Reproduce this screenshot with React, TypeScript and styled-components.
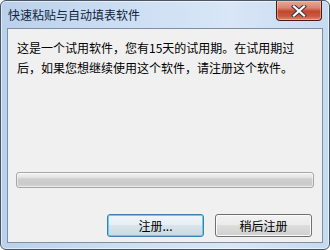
import React from "react";
import styled, { createGlobalStyle } from "styled-components";

const Global = createGlobalStyle`
  html, body { margin: 0; padding: 0; background: #ffffff; }
  body { width: 330px; height: 250px; overflow: hidden; }
  * { box-sizing: border-box; }
`;

const Window = styled.div`
  width: 330px;
  height: 250px;
  display: flex;
  flex-direction: column;
  border: 1px solid #4a5566;
  border-radius: 6px;
  background: linear-gradient(to right, #bad1eb 0%, #cddff3 40%, #d8e6f6 70%, #c6daf0 100%);
  box-shadow: inset 0 0 0 1px rgba(255, 255, 255, 0.55);
  overflow: hidden;
`;

const TitleBar = styled.div`
  height: 27px;
  flex: none;
  display: flex;
  align-items: flex-start;
  justify-content: space-between;
`;

const Title = styled.div`
  padding: 6px 0 0 7px;
  font-family: "Noto Sans CJK SC", "Noto Sans", sans-serif;
  font-size: 12px;
  line-height: 16px;
  color: #10243c;
`;

const CloseButton = styled.div`
  width: 46px;
  height: 20px;
  margin-right: 7px;
  border: 1px solid #4c1a12;
  border-top: none;
  border-radius: 0 0 4px 4px;
  background: linear-gradient(#e8a898 0%, #d88772 35%, #c4462f 55%, #c65a42 80%, #e08a70 100%);
  box-shadow: inset 0 0 0 1px rgba(255, 210, 200, 0.45);
  display: flex;
  align-items: center;
  justify-content: center;
`;

const Client = styled.div`
  flex: 1;
  margin: 0 6px 6px 6px;
  border: 1px solid #7f8fa6;
  background: #f0f0f0;
  display: flex;
  flex-direction: column;
`;

const Message = styled.div`
  padding: 9px 0 0 9px;
  font-family: "Noto Sans CJK SC", "Liberation Sans", sans-serif;
  font-size: 12px;
  line-height: 20px;
  color: #000;
  white-space: nowrap;
`;

const Progress = styled.div`
  margin: 94px 8px 0 8px;
  height: 16px;
  border: 1px solid #a6a6a6;
  border-radius: 3px;
  background: linear-gradient(#f2f2f2 0%, #e4e4e4 30%, #cdcdcd 45%, #cbcbcb 80%, #d6d6d6 100%);
  box-shadow: inset 0 0 0 1px rgba(255, 255, 255, 0.5);
`;

const ButtonRow = styled.div`
  margin-top: 26px;
  padding-right: 10px;
  display: flex;
  justify-content: flex-end;
  gap: 11px;
`;

const Button = styled.div<{ $default?: boolean }>`
  width: 97px;
  height: 23px;
  border-radius: 3px;
  border: 1px solid ${(p) => (p.$default ? "#3c7fb1" : "#707070")};
  background: ${(p) =>
    p.$default
      ? "linear-gradient(#eef5f9 0%, #e7eff4 50%, #d9e4ea 50%, #cbd9e1 100%)"
      : "linear-gradient(#f2f2f2 0%, #ebebeb 50%, #dddddd 50%, #cfcfcf 100%)"};
  box-shadow: ${(p) =>
    p.$default ? "inset 0 0 0 1px #5ed0f7" : "inset 0 0 0 1px #fbfbfb"};
  display: flex;
  align-items: center;
  justify-content: center;
  font-family: "Noto Sans CJK SC", "Liberation Sans", sans-serif;
  font-size: 12px;
  line-height: 14px;
  color: #000;
`;

export default function App() {
  return (
    <>
      <Global />
      <Window>
        <TitleBar>
          <Title>快速粘贴与自动填表软件</Title>
          <CloseButton>
            <svg width="16" height="12" viewBox="0 0 16 12">
              <path
                d="M3 1.5 L13 10.5 M13 1.5 L3 10.5"
                stroke="#3a3a3a"
                strokeWidth="4.2"
                strokeLinecap="square"
              />
              <path
                d="M3 1.5 L13 10.5 M13 1.5 L3 10.5"
                stroke="#ffffff"
                strokeWidth="2.2"
                strokeLinecap="square"
              />
            </svg>
          </CloseButton>
        </TitleBar>
        <Client>
          <Message>
            这是一个试用软件，您有15天的试用期。在试用期过
            <br />
            后，如果您想继续使用这个软件，请注册这个软件。
          </Message>
          <Progress />
          <ButtonRow>
            <Button $default>注册...</Button>
            <Button>稍后注册</Button>
          </ButtonRow>
        </Client>
      </Window>
    </>
  );
}
